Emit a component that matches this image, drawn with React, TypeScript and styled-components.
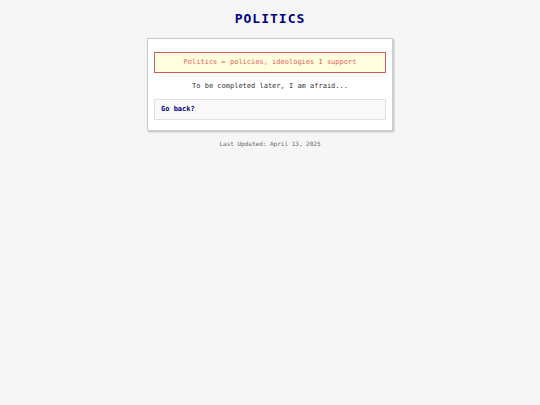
import React from 'react';
import styled, { createGlobalStyle } from 'styled-components';

const GlobalStyle = createGlobalStyle`
  *, *::before, *::after { box-sizing: border-box; }
  body {
    margin: 0;
    background: #f6f6f6;
    color: #333;
    font-family: "DejaVu Sans Mono", monospace;
    font-size: 7px;
    line-height: 11px;
    text-align: center;
  }
`;

const Page = styled.div`
  display: flex;
  flex-direction: column;
  align-items: center;
  padding: 10px 8px;
`;

const Title = styled.h1`
  margin: 0 0 10px;
  color: #000080;
  font-size: 13px;
  line-height: 18px;
  letter-spacing: 1px;
  text-transform: uppercase;
`;

const Panel = styled.main`
  display: flex;
  flex-direction: column;
  gap: 7px;
  width: 100%;
  max-width: 246px;
  padding: 13px 6px 10px;
  border: 1px solid #ccc;
  background: #fff;
  box-shadow: 1px 1px 2px rgba(0, 0, 0, 0.25);
`;

const Notice = styled.p`
  margin: 0;
  padding: 4px;
  border: 1px solid #d05c5c;
  background: #ffffe0;
  color: #ee6050;
`;

const Message = styled.p`
  margin: 0;
  line-height: 12px;
`;

const LinkBox = styled.nav`
  padding: 4px 6px;
  border: 1px solid #e0e0e0;
  background: #f9f9f9;
  text-align: left;
`;

const BackLink = styled.a`
  color: #000080;
  font-weight: bold;
  text-decoration: none;
`;

const Footer = styled.footer`
  margin-top: 7px;
  color: #666;
  font-size: 6px;
`;

export default function App() {
  return (
    <>
      <GlobalStyle />
      <Page>
        <Title>Politics</Title>
        <Panel>
          <Notice>Politics ≈ policies, ideologies I support</Notice>
          <Message>To be completed later, I am afraid...</Message>
          <LinkBox>
            <BackLink href="#">Go back?</BackLink>
          </LinkBox>
        </Panel>
        <Footer>Last Updated: April 13, 2025</Footer>
      </Page>
    </>
  );
}
